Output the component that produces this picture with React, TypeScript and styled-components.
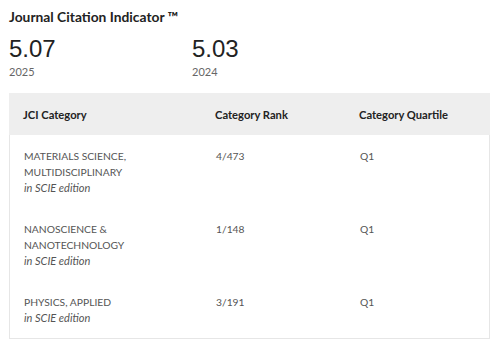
import styled, { createGlobalStyle } from "styled-components";

const GlobalStyle = createGlobalStyle`
  body {
    margin: 0;
    background: #fff;
    font-family: Lato, "Open Sans", sans-serif;
  }
`;

const Page = styled.div`
  width: 500px;
  padding: 8px 10px 0 9px;
  box-sizing: border-box;
`;

const Title = styled.h2`
  margin: 0;
  font-size: 13.8px;
  line-height: 18px;
  font-weight: 700;
  color: #222;
`;

const Metrics = styled.div`
  display: flex;
  margin-top: 9px;
`;

const Metric = styled.div`
  width: 183px;
  display: flex;
  flex-direction: column;
`;

const MetricValue = styled.span`
  font-family: "Liberation Sans", Arial, sans-serif;
  font-size: 24px;
  line-height: 28px;
  color: #222;
`;

const MetricYear = styled.span`
  font-size: 11px;
  line-height: 14px;
  color: #666;
  margin-top: 2px;
`;

const Table = styled.div`
  margin-top: 14px;
  border: 1px solid #e6e6e6;
  border-top: none;
`;

const Row = styled.div<{ $head?: boolean }>`
  display: grid;
  grid-template-columns: 192px 144px 1fr;
  padding: ${(p) => (p.$head ? "0" : "13px 0 12px")};
  height: ${(p) => (p.$head ? "42px" : "auto")};
  align-items: ${(p) => (p.$head ? "center" : "start")};
  background: ${(p) => (p.$head ? "#eeeeee" : "transparent")};
  margin: ${(p) => (p.$head ? "0 -1px" : "0")};
`;

const HeadCell = styled.div`
  padding-left: 14px;
  font-size: 11.2px;
  font-weight: 700;
  color: #222;
`;

const Cell = styled.div`
  padding-left: 14px;
  font-size: 10.3px;
  line-height: 16px;
  color: #555;
`;

const Edition = styled.div`
  font-style: italic;
  font-size: 11px;
`;

const rows = [
  { name: ["MATERIALS SCIENCE,", "MULTIDISCIPLINARY"], rank: "4/473", quartile: "Q1" },
  { name: ["NANOSCIENCE &", "NANOTECHNOLOGY"], rank: "1/148", quartile: "Q1" },
  { name: ["PHYSICS, APPLIED"], rank: "3/191", quartile: "Q1" },
];

const App = () => (
  <Page>
    <GlobalStyle />
    <Title>Journal Citation Indicator ™</Title>
    <Metrics>
      <Metric>
        <MetricValue>5.07</MetricValue>
        <MetricYear>2025</MetricYear>
      </Metric>
      <Metric>
        <MetricValue>5.03</MetricValue>
        <MetricYear>2024</MetricYear>
      </Metric>
    </Metrics>
    <Table>
      <Row $head>
        <HeadCell>JCI Category</HeadCell>
        <HeadCell>Category Rank</HeadCell>
        <HeadCell>Category Quartile</HeadCell>
      </Row>
      {rows.map((r) => (
        <Row key={r.rank}>
          <Cell>
            {r.name.map((n) => (
              <div key={n}>{n}</div>
            ))}
            <Edition>in SCIE edition</Edition>
          </Cell>
          <Cell>{r.rank}</Cell>
          <Cell>{r.quartile}</Cell>
        </Row>
      ))}
    </Table>
  </Page>
);

export default App;
